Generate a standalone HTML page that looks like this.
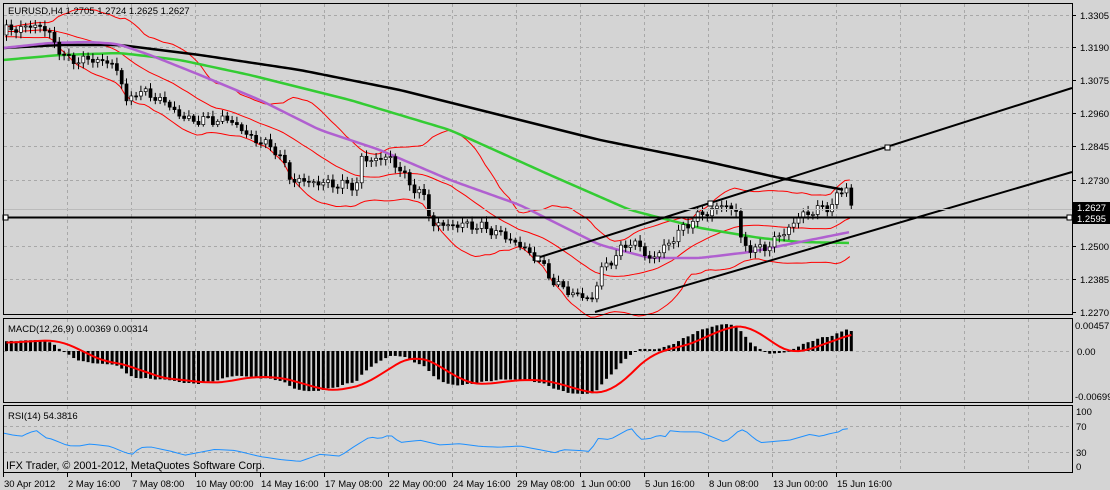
<!DOCTYPE html>
<html><head><meta charset="utf-8">
<style>
html,body{margin:0;padding:0;background:#d4d4d4;width:1110px;height:490px;overflow:hidden}
svg{display:block}
text{font-family:"Liberation Sans",sans-serif;font-size:9.5px;fill:#000}
</style></head><body>
<svg id="s" width="1110" height="490" xmlns="http://www.w3.org/2000/svg">
<rect width="1110" height="490" fill="#d4d4d4"/>
<g id="grid" stroke="#a8a8a8" stroke-dasharray="3,3" stroke-width="1"></g>
<g id="ind"></g>
<rect x="3.5" y="3.5" width="1069" height="311" fill="none" stroke="#000"/>
<rect x="3.5" y="318.5" width="1069" height="84" fill="none" stroke="#000"/>
<rect x="3.5" y="405.5" width="1069" height="67" fill="none" stroke="#000"/>
<text x="8" y="14">EURUSD,H4  1.2705 1.2724 1.2625 1.2627</text>
<text x="8" y="332">MACD(12,26,9) 0.00369 0.00314</text>
<text x="8" y="419">RSI(14) 54.3816</text>
<text x="6" y="469" style="font-size:10.8px">IFX Trader, © 2001-2012, MetaQuotes Software Corp.</text>
<g id="ax"></g>
</svg>
<script>
var NS="http://www.w3.org/2000/svg",s=document.getElementById('s');
function el(p,t,a,txt){var e=document.createElementNS(NS,t);for(var k in a)e.setAttribute(k,a[k]);if(txt!=null)e.textContent=txt;p.appendChild(e);return e;}
var G=document.getElementById('grid'),I=document.getElementById('ind'),A=document.getElementById('ax');
var xs=[67,131,195,260,324,388,452,516,580,644,708,772,836,900,964,1028];
xs.forEach(function(x){[[4,314],[319,402],[406,472]].forEach(function(r){el(G,'line',{x1:x+.5,x2:x+.5,y1:r[0],y2:r[1]});});});
var py=[15,47,80,113,146,180,246,279,312],pl=['1.3305','1.3190','1.3075','1.2960','1.2845','1.2730','1.2500','1.2385','1.2270'];
py.forEach(function(y,i){if(y<312)el(G,'line',{x1:4,x2:1072,y1:y+.5,y2:y+.5});el(A,'line',{x1:1073,x2:1076,y1:y+.5,y2:y+.5,stroke:'#000'});el(A,'text',{x:1080,y:y+4},pl[i]);});
el(G,'line',{x1:4,x2:1072,y1:351.5,y2:351.5});el(G,'line',{x1:4,x2:1072,y1:426.5,y2:426.5});el(G,'line',{x1:4,x2:1072,y1:452.5,y2:452.5});
el(A,'text',{x:1075,y:329},'0.00457');el(A,'text',{x:1077,y:355},'0.00');el(A,'text',{x:1075,y:400},'-0.00699');
el(A,'text',{x:1076,y:415},'100');el(A,'text',{x:1076,y:430},'70');el(A,'text',{x:1076,y:456},'30');el(A,'text',{x:1076,y:470},'0');
var dl=['30 Apr 2012','2 May 16:00','7 May 08:00','10 May 00:00','14 May 16:00','17 May 08:00','22 May 00:00','24 May 16:00','29 May 08:00','1 Jun 00:00','5 Jun 16:00','8 Jun 08:00','13 Jun 00:00','15 Jun 16:00'];
var dx=[3].concat(xs.slice(0,13));
dl.forEach(function(t,i){el(A,'line',{x1:dx[i]+.5,x2:dx[i]+.5,y1:473,y2:477,stroke:'#000'});el(A,'text',{x:dx[i]+1,y:487},t);});
var W=[[5,30],[40,25],[55,45],[65,60],[100,60],[118,70],[125,105],[135,90],[160,100],[185,120],[230,120],[245,135],[275,150],[290,180],[340,185],[355,185],[360,160],[390,158],[405,180],[425,200],[430,225],[470,225],[490,230],[510,240],[535,258],[555,285],[575,295],[590,300],[600,270],[630,240],[650,260],[665,245],[690,220],[720,205],[735,210],[740,245],[760,250],[780,235],[800,215],[830,205],[845,185],[850,208]];
function interp(P,x){for(var i=1;i<P.length;i++){if(x<=P[i][0]){var a=P[i-1],b=P[i];return a[1]+(b[1]-a[1])*(x-a[0])/(b[0]-a[0]);}}return P[P.length-1][1];}
var bars=[],step=4.8,prev=35;
for(var x=5;x<=851;x+=step){var n=Math.sin(x*0.9)*3+Math.sin(x*2.3)*2.5;var c=interp(W,x)+n;var o=prev;var h=Math.min(o,c)-2-Math.abs(Math.sin(x*1.7))*4,l=Math.max(o,c)+2+Math.abs(Math.cos(x*1.3))*4;bars.push({x:x,o:o,c:c,h:h,l:l});prev=c;}
function poly(P,col,w){el(I,'polyline',{points:P.map(function(p){return p[0]+','+p[1]}).join(' '),fill:'none',stroke:col,'stroke-width':w,'stroke-linejoin':'round'});}
function smooth(P){var out=[];for(var x=P[0][0];x<=P[P.length-1][0];x+=3)out.push([x,interp(P,x)]);for(var k=0;k<4;k++){for(var i=1;i<out.length-1;i++)out[i][1]=(out[i-1][1]+out[i][1]*2+out[i+1][1])/4;}return out;}
var cl=[];for(var k=0;k<20;k++)cl.push(32);bars.forEach(function(b){cl.push(b.c);});
var up=[],mid=[],lo=[];
bars.forEach(function(b,i){var sl=cl.slice(i+1,i+21),m=sl.reduce(function(a,v){return a+v},0)/20,sd=Math.sqrt(sl.reduce(function(a,v){return a+(v-m)*(v-m)},0)/20);mid.push([b.x,m]);up.push([b.x,m-2*sd-2]);lo.push([b.x,m+2*sd+2]);});
poly(up,'#ff0000',1);poly(mid,'#ff0000',1);poly(lo,'#ff0000',1);
poly(smooth([[3,48],[60,45],[120,45],[200,55],[300,70],[400,90],[500,115],[600,140],[700,160],[780,178],[845,190]]),'#000',2.5);
poly(smooth([[3,60],[60,55],[120,53],[180,60],[250,75],[350,100],[450,130],[550,175],[630,210],[700,228],[760,238],[800,242],[850,243]]),'#33cc33',2.5);
poly(smooth([[3,48],[50,43],[90,42],[118,44],[150,55],[200,75],[260,100],[320,130],[380,150],[450,180],[520,205],[560,225],[600,245],[650,258],[700,258],[750,252],[800,242],[850,232]]),'#b060d0',2.5);
bars.forEach(function(b){var t=Math.min(b.o,b.c),bt=Math.max(b.o,b.c);el(I,'line',{x1:b.x+1.5,x2:b.x+1.5,y1:b.h,y2:b.l,stroke:'#000'});el(I,'rect',{x:b.x,y:t,width:3,height:Math.max(1,bt-t),fill:b.c<b.o?'#fff':'#000',stroke:'#000','stroke-width':0.7});});
el(I,'line',{x1:4,x2:1072,y1:217.5,y2:217.5,stroke:'#000','stroke-width':2});
el(I,'rect',{x:3,y:215,width:5,height:5,fill:'#fff',stroke:'#000'});el(I,'rect',{x:1067,y:215,width:5,height:5,fill:'#fff',stroke:'#000'});
el(I,'line',{x1:537,y1:258,x2:1072,y2:88,stroke:'#000','stroke-width':2});
el(I,'line',{x1:595,y1:312,x2:1072,y2:172,stroke:'#000','stroke-width':2});
[[535,256],[708,201],[885,145]].forEach(function(p){el(I,'rect',{x:p[0],y:p[1],width:5,height:5,fill:'#fff',stroke:'#000'});});
el(I,'line',{x1:4,x2:1072,y1:209.5,y2:209.5,stroke:'#bbb'});
el(A,'rect',{x:1073,y:202,width:37,height:11,fill:'#000'});el(A,'text',{x:1077,y:211,style:'fill:#fff'},'1.2627');
el(A,'rect',{x:1073,y:213,width:37,height:11,fill:'#000'});el(A,'text',{x:1077,y:222,style:'fill:#fff'},'1.2595');
var pre=[];for(var k=0;k<60;k++)pre.push(70-k*0.6);var all=pre.concat(bars.map(function(b){return b.c}));
var pr=all.map(function(y){return 1.3305-(y-15)*0.000348});
var e12=pr[0],e26=pr[0],mac=[];pr.forEach(function(p){e12+=(p-e12)*2/13;e26+=(p-e26)*2/27;mac.push(e12-e26);});
var mc=mac.slice(60),sig=[];var sc=5800;
mc.forEach(function(v,i){var sl=mac.slice(60+i-8,60+i+1),m=sl.reduce(function(a,b){return a+b},0)/9;sig.push([bars[i].x+1.5,351-m*sc]);var y=351-v*sc;el(I,'rect',{x:bars[i].x,y:Math.min(351,y),width:3,height:Math.max(1,Math.abs(y-351)),fill:'#000'});});
poly(sig,'#ff0000',2);
var R=[[3,434],[13,436],[22,437],[30,433],[38,431],[44,438],[50,439],[58,442],[68,446],[80,446],[90,444],[110,446],[125,452],[132,454],[140,447],[150,446],[170,450],[185,454],[200,451],[215,448],[235,449],[260,455],[280,458],[300,460],[320,453],[340,455],[355,445],[370,436],[380,438],[390,434],[400,442],[420,440],[440,445],[460,444],[480,447],[500,448],[520,447],[540,451],[555,454],[563,451],[580,452],[590,453],[598,440],[610,441],[630,430],[635,431],[638,441],[650,440],[660,436],[663,441],[670,432],[680,433],[700,433],[710,437],[725,443],[735,435],[740,430],[745,431],[752,437],[760,443],[780,441],[790,440],[800,437],[810,434],[820,436],[830,433],[840,431],[845,427],[848,428],[852,436]];
var rr=[];for(var x=3;x<=852;x+=4.8){rr.push([x,interp(R,x)+Math.sin(x*1.3)*1.5]);}
poly(rr,'#1e90ff',1);
</script>
</body></html>
